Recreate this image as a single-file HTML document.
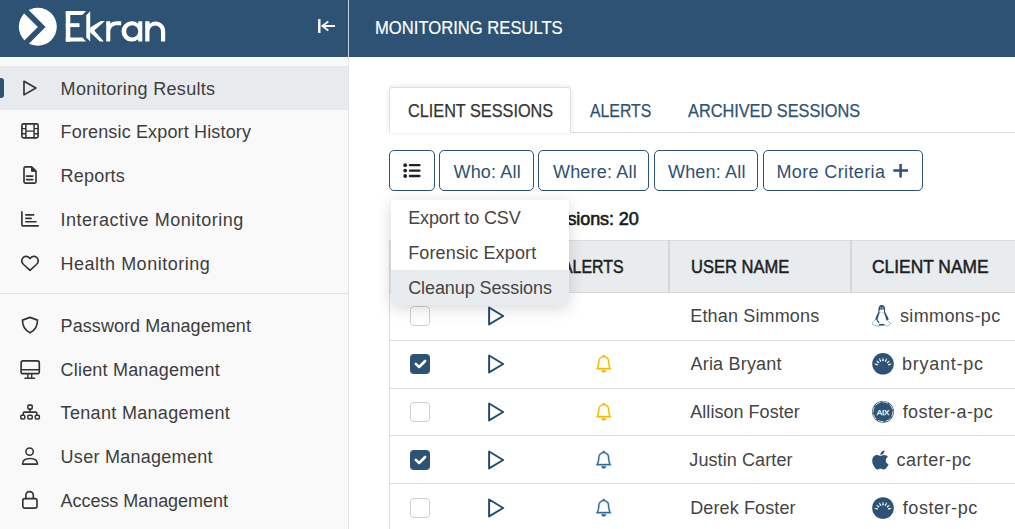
<!DOCTYPE html>
<html><head><meta charset="utf-8">
<style>
*{box-sizing:border-box;margin:0;padding:0}
html,body{width:1015px;height:529px;overflow:hidden;background:#fff}
body{position:relative;font-family:"Liberation Sans",sans-serif;font-size:18px;color:#3a3a3a}
.t{position:absolute;white-space:nowrap;line-height:20px;font-size:18px}
.abs{position:absolute}
#hdr{position:absolute;left:0;top:0;width:1015px;height:57px;background:#2d5273}
#vsep-h{position:absolute;left:348px;top:0;width:1px;height:57px;background:#c4d0db}
#side{position:absolute;left:0;top:57px;width:348px;height:472px;background:#f9f9f9;border-top:1px solid #fff}
#vsep{position:absolute;left:348px;top:57px;width:1px;height:472px;background:#e4e4e4}
#sel{position:absolute;left:0;top:66px;width:348px;height:44px;background:#e8ebee}
#ind{position:absolute;left:0;top:78px;width:4px;height:20px;background:#2d5273;border-radius:0 3px 3px 0}
#hsep{position:absolute;left:0;top:293px;width:348px;height:1px;background:#e2e2e2}
.si{color:#3d3d3d}
.ic{position:absolute;overflow:visible}
</style></head><body>
<div id="hdr"></div>
<div id="vsep-h"></div>
<div id="side"></div>
<div id="vsep"></div>
<div id="sel"></div>
<div id="ind"></div>
<div id="hsep"></div>

<!-- logo -->
<svg class="ic" style="left:0;top:0" width="180" height="57" viewBox="0 0 180 57">
  <circle cx="37.8" cy="26.8" r="19" fill="#fff"/>
  <polyline points="16.75,2 41.75,27 16.75,52" fill="none" stroke="#2d5273" stroke-width="5.4" stroke-linejoin="miter"/>
  <g fill="#fff">
    <rect x="65.8" y="11.1" width="4.5" height="30.5"/>
    <polygon points="65.8,11.1 86.1,11.1 82.3,15 65.8,15"/>
    <rect x="65.8" y="23.2" width="13.7" height="3.9"/>
    <polygon points="65.8,37.6 82.3,37.6 86.1,41.6 65.8,41.6"/>
    <polygon points="86.3,15.3 90.2,11.3 90.2,41.6 86.3,37.6"/>
    <polygon points="90.1,27.4 100.9,21.1 104.8,21.1 94.3,30.4 103.8,41.6 99.8,41.6 90.1,32.2"/>
    <path d="M106.2 41.6V21.2H110.3V23.6C112 22 114.5 21.2 117 21.2H121.2V25.3H117.2C113.2 25.3 110.3 28 110.3 32V41.6Z"/>
    <path fill-rule="evenodd" d="M142.3 21.2V41.6H138.3V39.2A10.2 10.2 0 1 1 138.3 23.6V21.2ZM132.2 25.3A6.05 6.05 0 1 0 132.2 37.4A6.05 6.05 0 1 0 132.2 25.3Z"/>
    <path d="M145.2 41.6V21.2H149.5V23.8A9.6 9.6 0 0 1 165.2 31.2V41.6H161V31.2A5.7 5.7 0 0 0 149.5 31.2V41.6Z"/>
  </g>
</svg>

<!-- collapse icon -->
<svg class="ic" style="left:310px;top:12px" width="30" height="30" viewBox="0 0 30 30">
  <rect x="8.1" y="7.1" width="2.4" height="13.9" fill="#fff"/>
  <path d="M12.3 14H25M18.3 9.6L12.3 14L18.3 18.5" fill="none" stroke="#fff" stroke-width="1.8"/>
</svg>

<div class="t" style="left:375.3px;top:18px;color:#fff;-webkit-text-stroke:0.2px #fff;transform:scaleX(0.923);transform-origin:0 0">MONITORING RESULTS</div>

<!-- sidebar icons -->
<svg class="ic" style="left:0;top:57px" width="60" height="472" viewBox="0 57 60 472" fill="none" stroke="#333" stroke-width="1.65" stroke-linejoin="round" stroke-linecap="round">
  <path d="M24 81.2L35.9 88L24 94.9Z"/>
  <rect x="21.9" y="123.9" width="16.2" height="13.9" rx="1.6"/>
  <path d="M25.9 124V137.8M34.1 124V137.8M25.9 131.1H34.1M22 128.6H25.9M22 133.7H25.9M34.1 128.6H38M34.1 133.7H38" stroke-width="1.45"/>
  <path d="M25.4 166.8H31.6L36 171.2V181.8Q36 183.1 34.7 183.1H25.3Q24 183.1 24 181.8V168.2Q24 166.8 25.4 166.8Z"/>
  <path d="M31.5 167V171.3H35.8Z" fill="#333" stroke-width="1"/>
  <path d="M26.5 176.1H32.8M26.5 179.6H32.8"/>
  <path d="M21.9 211.8V224.9Q21.9 225.8 22.8 225.8H38.2"/>
  <path d="M25.8 214.9H33.6M25.8 218.3H31.2M25.8 221.7H36"/>
  <path d="M30 258.6C28.2 255.9 24.6 255.6 22.8 257.9C21.3 259.9 21.7 262.6 23.6 264.5L30 270.4L36.4 264.5C38.3 262.6 38.7 259.9 37.2 257.9C35.4 255.6 31.8 255.9 30 258.6Z"/>
  <path d="M30 317.4L37.5 320.1C37.6 326 35.3 330.3 30 332.8C24.7 330.3 22.4 326 22.5 320.1Z"/>
  <rect x="21.1" y="360.9" width="18.2" height="12.8" rx="2"/>
  <path d="M21.3 369.7H39.1M27.9 374V377.8M31.7 374V377.8M25 378.2H34.6" stroke-width="1.45"/>
  <rect x="27.9" y="405.1" width="4.3" height="4" rx="1" stroke-width="1.55"/>
  <path d="M30 409.2V412.1M23.2 414.9V413.4Q23.2 412.1 24.5 412.1H35.6Q36.9 412.1 36.9 413.4V414.9" stroke-width="1.55"/>
  <rect x="20.8" y="415.3" width="4" height="3.7" rx="1" stroke-width="1.55"/>
  <rect x="27.9" y="415.3" width="4.3" height="3.7" rx="1" stroke-width="1.55"/>
  <rect x="35.3" y="415.3" width="4" height="3.7" rx="1" stroke-width="1.55"/>
  <circle cx="29.6" cy="451.6" r="3.7" stroke-width="1.55"/>
  <path d="M22.5 464.1C22.5 460.3 25.5 458.4 30 458.4C34.5 458.4 37.5 460.3 37.5 464.1Z" stroke-width="1.55"/>
  <path d="M25.9 498.5V495.3A3.7 3.7 0 0 1 33.3 495.3V498.5"/>
  <rect x="22.8" y="498.6" width="14.2" height="9.5" rx="2"/>
</svg>

<!-- sidebar texts -->
<div class="t si" style="left:60.6px;top:79px;letter-spacing:0.32px">Monitoring Results</div>
<div class="t si" style="left:60.6px;top:122px;letter-spacing:0.15px">Forensic Export History</div>
<div class="t si" style="left:60.6px;top:166px;letter-spacing:0.2px">Reports</div>
<div class="t si" style="left:60.6px;top:210px;letter-spacing:0.5px">Interactive Monitoring</div>
<div class="t si" style="left:60.6px;top:254px;letter-spacing:0.5px">Health Monitoring</div>
<div class="t si" style="left:60.6px;top:316px;letter-spacing:0.07px">Password Management</div>
<div class="t si" style="left:60.6px;top:360px;letter-spacing:0.19px">Client Management</div>
<div class="t si" style="left:60.6px;top:403px;letter-spacing:0.32px">Tenant Management</div>
<div class="t si" style="left:60.6px;top:447px;letter-spacing:0.27px">User Management</div>
<div class="t si" style="left:60.6px;top:491px;letter-spacing:-0.05px">Access Management</div>

<!-- main -->
<!-- tabs -->
<div class="abs" style="left:389px;top:132px;width:626px;height:1px;background:#dedede"></div>
<div class="abs" style="left:389px;top:87px;width:182px;height:46px;background:#fff;border:1px solid #dedede;border-bottom:none;border-radius:4px 4px 0 0;box-shadow:0 -1px 6px rgba(0,0,0,0.09)"></div>
<div class="t" style="left:407.7px;top:101px;color:#333;-webkit-text-stroke:0.25px #333;transform:scaleX(0.903);transform-origin:0 0">CLIENT SESSIONS</div>
<div class="t" style="left:590px;top:101px;color:#2d5273;-webkit-text-stroke:0.25px #2d5273;transform:scaleX(0.88);transform-origin:0 0">ALERTS</div>
<div class="t" style="left:688px;top:101px;color:#2d5273;-webkit-text-stroke:0.25px #2d5273;transform:scaleX(0.906);transform-origin:0 0">ARCHIVED SESSIONS</div>

<!-- filter buttons -->
<div class="abs" style="left:389px;top:150px;width:46px;height:41px;border:1.5px solid #2d5273;border-radius:5px"></div>
<div class="abs" style="left:439px;top:150px;width:95px;height:41px;border:1.5px solid #2d5273;border-radius:5px"></div>
<div class="abs" style="left:538px;top:150px;width:111px;height:41px;border:1.5px solid #2d5273;border-radius:5px"></div>
<div class="abs" style="left:654px;top:150px;width:104px;height:41px;border:1.5px solid #2d5273;border-radius:5px"></div>
<div class="abs" style="left:763px;top:150px;width:160px;height:41px;border:1.5px solid #2d5273;border-radius:5px"></div>
<svg class="ic" style="left:400px;top:160px" width="24" height="22" viewBox="0 0 24 22">
  <circle cx="5.2" cy="5.2" r="1.9" fill="#222"/><circle cx="5.2" cy="10.6" r="1.9" fill="#222"/><circle cx="5.2" cy="16" r="1.9" fill="#222"/>
  <path d="M9.9 5.2H19.5M9.9 10.6H19.5M9.9 16H19.5" stroke="#222" stroke-width="2.3" stroke-linecap="round"/>
</svg>
<div class="t" style="left:453.5px;top:162px;color:#2d5273;letter-spacing:0.17px">Who: All</div>
<div class="t" style="left:553px;top:162px;color:#2d5273;letter-spacing:0.18px">Where: All</div>
<div class="t" style="left:668px;top:162px;color:#2d5273;letter-spacing:0.17px">When: All</div>
<div class="t" style="left:776.5px;top:162px;color:#2d5273;letter-spacing:0.37px">More Criteria</div>
<svg class="ic" style="left:892px;top:162px" width="18" height="18" viewBox="0 0 18 18">
  <path d="M8.6 1.9V15.6M1.3 8.6H16.1" stroke="#2d5273" stroke-width="2.5"/>
</svg>

<!-- total sessions -->
<div class="t" style="left:391px;top:209px;width:247.6px;text-align:right;color:#1a1a1a;-webkit-text-stroke:0.6px #1a1a1a;letter-spacing:-0.1px">Total number of sessions: 20</div>

<!-- table -->
<div class="abs" style="left:389px;top:240px;width:626px;height:53px;background:#e9ecef;border-top:1px solid #dcdcdc;border-bottom:1px solid #d9d9d9"></div>
<div class="abs" style="left:389px;top:240px;width:1px;height:289px;background:#dcdcdc"></div>
<div class="abs" style="left:668px;top:240px;width:2px;height:52px;background:#d6d6d6"></div>
<div class="abs" style="left:850px;top:240px;width:2px;height:52px;background:#d6d6d6"></div>
<div class="t" style="left:561.6px;top:257px;color:#1e1e1e;-webkit-text-stroke:0.5px #1e1e1e;transform:scaleX(0.884);transform-origin:0 0">ALERTS</div>
<div class="t" style="left:690.6px;top:257px;color:#1e1e1e;-webkit-text-stroke:0.5px #1e1e1e;transform:scaleX(0.918);transform-origin:0 0">USER NAME</div>
<div class="t" style="left:872px;top:257px;color:#1e1e1e;-webkit-text-stroke:0.5px #1e1e1e;transform:scaleX(0.966);transform-origin:0 0">CLIENT NAME</div>

<div class="abs" style="left:389px;top:340px;width:626px;height:1px;background:#dedede"></div>
<div class="abs" style="left:389px;top:388px;width:626px;height:1px;background:#dedede"></div>
<div class="abs" style="left:389px;top:435px;width:626px;height:1px;background:#dedede"></div>
<div class="abs" style="left:389px;top:483px;width:626px;height:1px;background:#dedede"></div>

<div class="t" style="left:690.3px;top:306px;color:#444;letter-spacing:0.15px">Ethan Simmons</div>
<div class="t" style="left:690.5px;top:354px;color:#444;letter-spacing:0.2px">Aria Bryant</div>
<div class="t" style="left:690.3px;top:402px;color:#444;letter-spacing:0.03px">Allison Foster</div>
<div class="t" style="left:689.3px;top:450px;color:#444;letter-spacing:0.1px">Justin Carter</div>
<div class="t" style="left:690.2px;top:498px;color:#444;letter-spacing:0.12px">Derek Foster</div>

<div class="t" style="left:900px;top:306px;color:#444;letter-spacing:0.35px">simmons-pc</div>
<div class="t" style="left:902px;top:354px;color:#444;letter-spacing:0.75px">bryant-pc</div>
<div class="t" style="left:902.7px;top:402px;color:#444;letter-spacing:0.4px">foster-a-pc</div>
<div class="t" style="left:896.5px;top:450px;color:#444;letter-spacing:0.45px">carter-pc</div>
<div class="t" style="left:902.8px;top:498px;color:#444;letter-spacing:0.55px">foster-pc</div>

<!-- table icons -->
<div class="abs" style="left:410px;top:306px;width:20px;height:20px;background:#fff;border:1px solid #cfcfcf;border-radius:4px"></div>
<svg class="ic" style="left:480px;top:300px" width="32" height="32" viewBox="0 0 32 32"><path d="M9.1 7.5L23.2 16L9.1 24.4Z" fill="none" stroke="#264d72" stroke-width="2" stroke-linejoin="round"/></svg>
<div class="abs" style="left:410px;top:354px;width:20px;height:20px;background:#2d5273;border-radius:4px"></div>
<svg class="ic" style="left:410px;top:354px" width="20" height="20" viewBox="0 0 20 20"><path d="M5.8 9.9L9.2 13L15.1 7" fill="none" stroke="#fff" stroke-width="2.6" stroke-linecap="round" stroke-linejoin="round"/></svg>
<svg class="ic" style="left:480px;top:348px" width="32" height="32" viewBox="0 0 32 32"><path d="M9.1 7.5L23.2 16L9.1 24.4Z" fill="none" stroke="#264d72" stroke-width="2" stroke-linejoin="round"/></svg>
<svg class="ic" style="left:594.9px;top:354.9px" width="17.4" height="17.4" viewBox="0 0 16 16"><path fill="#f6b700" stroke="#f6b700" stroke-width="0.4" d="M8 16a2 2 0 0 0 2-2H6a2 2 0 0 0 2 2M8 1.918l-.797.161A4 4 0 0 0 4 6c0 .628-.134 2.197-.459 3.742-.16.767-.376 1.566-.663 2.258h10.244c-.287-.692-.502-1.49-.663-2.258C12.134 8.197 12 6.628 12 6a4 4 0 0 0-3.203-3.92zM14.22 12c.223.447.481.801.78 1H1c.299-.199.557-.553.78-1C2.68 10.2 3 6.88 3 6c0-2.42 1.72-4.440 4.005-4.901a1 1 0 1 1 1.99 0A5 5 0 0 1 13 6c0 .88.32 4.2 1.22 6"/></svg>
<div class="abs" style="left:410px;top:402px;width:20px;height:20px;background:#fff;border:1px solid #cfcfcf;border-radius:4px"></div>
<svg class="ic" style="left:480px;top:396px" width="32" height="32" viewBox="0 0 32 32"><path d="M9.1 7.5L23.2 16L9.1 24.4Z" fill="none" stroke="#264d72" stroke-width="2" stroke-linejoin="round"/></svg>
<svg class="ic" style="left:594.9px;top:402.9px" width="17.4" height="17.4" viewBox="0 0 16 16"><path fill="#f6b700" stroke="#f6b700" stroke-width="0.4" d="M8 16a2 2 0 0 0 2-2H6a2 2 0 0 0 2 2M8 1.918l-.797.161A4 4 0 0 0 4 6c0 .628-.134 2.197-.459 3.742-.16.767-.376 1.566-.663 2.258h10.244c-.287-.692-.502-1.49-.663-2.258C12.134 8.197 12 6.628 12 6a4 4 0 0 0-3.203-3.92zM14.22 12c.223.447.481.801.78 1H1c.299-.199.557-.553.78-1C2.68 10.2 3 6.88 3 6c0-2.42 1.72-4.440 4.005-4.901a1 1 0 1 1 1.99 0A5 5 0 0 1 13 6c0 .88.32 4.2 1.22 6"/></svg>
<div class="abs" style="left:410px;top:450px;width:20px;height:20px;background:#2d5273;border-radius:4px"></div>
<svg class="ic" style="left:410px;top:450px" width="20" height="20" viewBox="0 0 20 20"><path d="M5.8 9.9L9.2 13L15.1 7" fill="none" stroke="#fff" stroke-width="2.6" stroke-linecap="round" stroke-linejoin="round"/></svg>
<svg class="ic" style="left:480px;top:444px" width="32" height="32" viewBox="0 0 32 32"><path d="M9.1 7.5L23.2 16L9.1 24.4Z" fill="none" stroke="#264d72" stroke-width="2" stroke-linejoin="round"/></svg>
<svg class="ic" style="left:594.9px;top:450.9px" width="17.4" height="17.4" viewBox="0 0 16 16"><path fill="#2f6a94" stroke="#2f6a94" stroke-width="0.4" d="M8 16a2 2 0 0 0 2-2H6a2 2 0 0 0 2 2M8 1.918l-.797.161A4 4 0 0 0 4 6c0 .628-.134 2.197-.459 3.742-.16.767-.376 1.566-.663 2.258h10.244c-.287-.692-.502-1.49-.663-2.258C12.134 8.197 12 6.628 12 6a4 4 0 0 0-3.203-3.92zM14.22 12c.223.447.481.801.78 1H1c.299-.199.557-.553.78-1C2.68 10.2 3 6.88 3 6c0-2.42 1.72-4.440 4.005-4.901a1 1 0 1 1 1.99 0A5 5 0 0 1 13 6c0 .88.32 4.2 1.22 6"/></svg>
<div class="abs" style="left:410px;top:498px;width:20px;height:20px;background:#fff;border:1px solid #cfcfcf;border-radius:4px"></div>
<svg class="ic" style="left:480px;top:492px" width="32" height="32" viewBox="0 0 32 32"><path d="M9.1 7.5L23.2 16L9.1 24.4Z" fill="none" stroke="#264d72" stroke-width="2" stroke-linejoin="round"/></svg>
<svg class="ic" style="left:594.9px;top:498.9px" width="17.4" height="17.4" viewBox="0 0 16 16"><path fill="#2f6a94" stroke="#2f6a94" stroke-width="0.4" d="M8 16a2 2 0 0 0 2-2H6a2 2 0 0 0 2 2M8 1.918l-.797.161A4 4 0 0 0 4 6c0 .628-.134 2.197-.459 3.742-.16.767-.376 1.566-.663 2.258h10.244c-.287-.692-.502-1.49-.663-2.258C12.134 8.197 12 6.628 12 6a4 4 0 0 0-3.203-3.92zM14.22 12c.223.447.481.801.78 1H1c.299-.199.557-.553.78-1C2.68 10.2 3 6.88 3 6c0-2.42 1.72-4.440 4.005-4.901a1 1 0 1 1 1.99 0A5 5 0 0 1 13 6c0 .88.32 4.2 1.22 6"/></svg>
<svg class="ic" style="left:860px;top:292px" width="40" height="237" viewBox="860 292 40 237">
<g>
<path d="M878.4 312.3C878.2 310.5 878.3 308.5 878.8 307C879.4 305.5 880.5 304.9 881.8 304.9C883.2 304.9 884.3 305.6 884.8 307.2C885.2 308.6 885.2 310.5 884.9 312.3Z" fill="#2d5273"/>
<path d="M879.4 312.3C879.4 311 879.6 309.9 880.2 309.2C881 310 882.7 310 883.6 309.1C884.1 309.9 884.1 311 884 312.3Z" fill="#fff"/>
<circle cx="880.9" cy="307.9" r="0.55" fill="#fff"/><circle cx="882.8" cy="307.9" r="0.55" fill="#fff"/>
<path d="M878.4 311.8C877.6 314.3 875.8 316.6 875.3 319.4L877.4 320.6C877.8 318 878.8 315.3 879.8 312.6Z" fill="#2d5273"/>
<path d="M885 311.8C885.9 314.3 888 316.6 888.8 319.4L886.5 320.6C885.9 318 884.9 315.3 883.8 312.6Z" fill="#2d5273"/>
<path d="M877 320.2L879 322.9" stroke="#2d5273" stroke-width="1.3"/>
<rect x="879.1" y="323.9" width="5.2" height="1.7" fill="#2d5273"/>
<path d="M875.2 319.8L872.4 322.6L872.9 324.7L878.8 326.4L879.3 324.2M886.4 320L891 323.4L887.3 326.2L884.4 325.2" fill="none" stroke="#2d5273" stroke-width="0.8" opacity="0.5"/>
</g>
<circle cx="883" cy="363.8" r="10.8" fill="#2d5273"/><polygon points="877.94,364.06 874.61,363.61 874.46,364.09 877.41,365.68" fill="#fff"/><polygon points="879.41,362.22 876.55,360.46 876.22,360.83 878.27,363.48" fill="#fff"/><polygon points="881.50,361.14 879.61,358.37 879.15,358.57 879.95,361.83" fill="#fff"/><polygon points="883.85,361.00 883.25,357.70 882.75,357.70 882.15,361.00" fill="#fff"/><polygon points="886.05,361.83 886.85,358.57 886.39,358.37 884.50,361.14" fill="#fff"/><polygon points="887.73,363.48 889.78,360.83 889.45,360.46 886.59,362.22" fill="#fff"/><polygon points="888.59,365.68 891.54,364.09 891.39,363.61 888.06,364.06" fill="#fff"/>
<circle cx="883" cy="411.8" r="10.9" fill="#2d5273"/><circle cx="883" cy="411.8" r="9.9" fill="none" stroke="#fff" stroke-width="0.8" stroke-dasharray="6 1.78" stroke-dashoffset="1"/><text x="883" y="414.6" text-anchor="middle" font-family="Liberation Sans" font-size="8" stroke="#fff" stroke-width="0.25" fill="#fff" letter-spacing="-0.2">AIX</text>
<path transform="translate(872.03 449.05) scale(0.0433 0.0424)" fill="#2d5273" d="M318.7 268.7c-.2-36.7 16.4-64.4 50-84.8-18.8-26.9-47.2-41.7-84.7-44.6-35.5-2.8-74.3 20.7-88.5 20.7-15 0-49.4-19.7-76.4-19.7C63.3 141.2 4 184.8 4 273.5q0 39.3 14.4 81.2c12.8 36.7 59 126.7 107.2 125.2 25.2-.6 43-17.9 75.8-17.9 31.8 0 48.3 17.9 76.4 17.9 48.6-.7 90.4-82.5 102.6-119.3-65.2-30.7-61.7-90-61.7-91.9zm-56.6-164.2c27.3-32.4 24.8-61.9 24-72.5-24.1 1.4-52 16.4-67.9 34.9-17.5 19.8-27.8 44.3-25.6 71.9 26.1 2 49.9-11.4 69.5-34.3z"/>
<circle cx="883" cy="508" r="10.8" fill="#2d5273"/><polygon points="877.94,508.26 874.61,507.81 874.46,508.29 877.41,509.88" fill="#fff"/><polygon points="879.41,506.42 876.55,504.66 876.22,505.03 878.27,507.68" fill="#fff"/><polygon points="881.50,505.34 879.61,502.57 879.15,502.77 879.95,506.03" fill="#fff"/><polygon points="883.85,505.20 883.25,501.90 882.75,501.90 882.15,505.20" fill="#fff"/><polygon points="886.05,506.03 886.85,502.77 886.39,502.57 884.50,505.34" fill="#fff"/><polygon points="887.73,507.68 889.78,505.03 889.45,504.66 886.59,506.42" fill="#fff"/><polygon points="888.59,509.88 891.54,508.29 891.39,507.81 888.06,508.26" fill="#fff"/>
</svg>

<!-- dropdown -->
<div class="abs" style="left:391px;top:200px;width:178px;height:105px;background:#fff;border-radius:3px;box-shadow:0 3px 16px rgba(0,0,0,0.16)"></div>
<div class="abs" style="left:391px;top:270px;width:178px;height:35px;background:#e9ecef;border-radius:0 0 3px 3px"></div>
<div class="t" style="left:408.2px;top:208px;color:#444;letter-spacing:-0.13px">Export to CSV</div>
<div class="t" style="left:408.2px;top:243px;color:#444;letter-spacing:0.14px">Forensic Export</div>
<div class="t" style="left:408.2px;top:278px;color:#444;letter-spacing:-0.09px">Cleanup Sessions</div>

</body></html>
